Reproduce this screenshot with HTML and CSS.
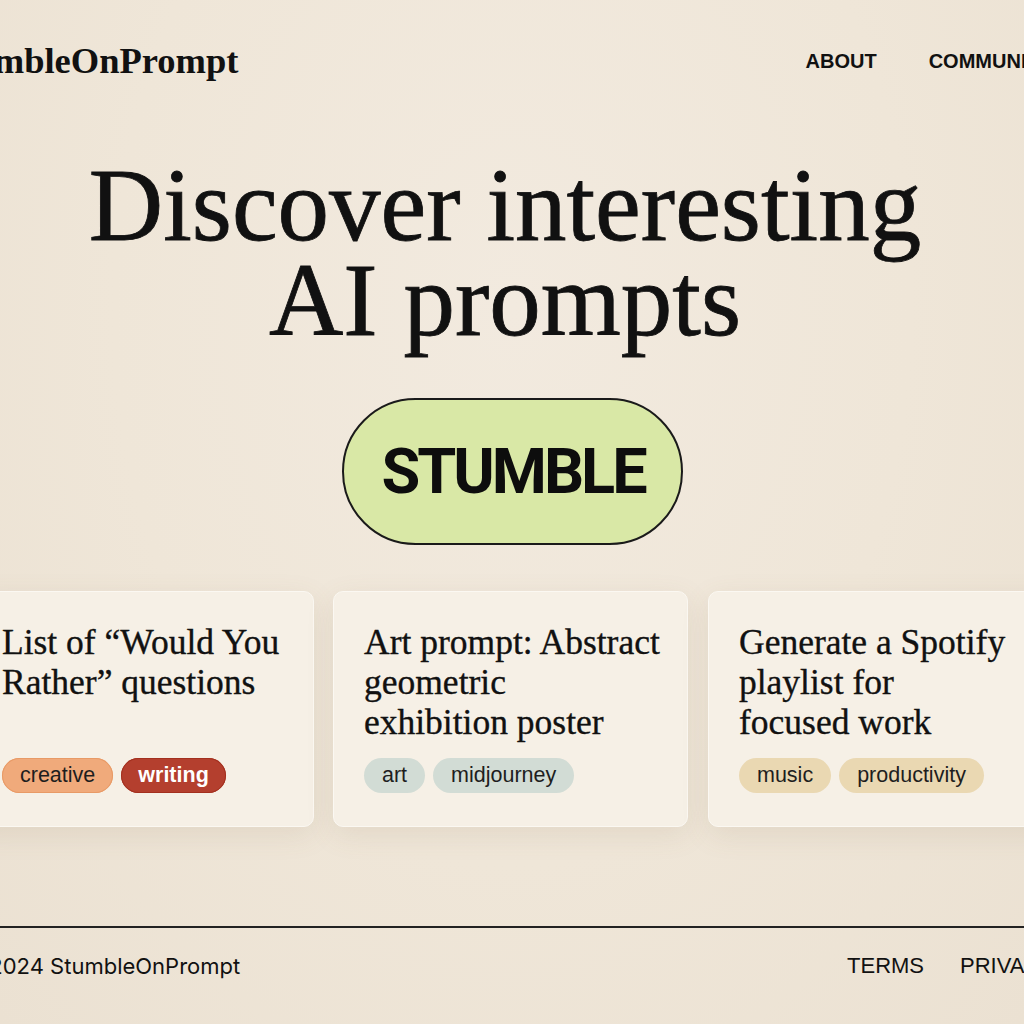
FILE: index.html
```html
<!DOCTYPE html>
<html lang="en">
<head>
<meta charset="utf-8">
<title>StumbleOnPrompt</title>
<link rel="stylesheet" href="styles.css">
</head>
<body>
<div class="page">
  <header class="header">
    <div class="logo">StumbleOnPrompt</div>
    <nav class="nav">
      <a href="#">ABOUT</a>
      <a href="#">COMMUNITY</a>
    </nav>
  </header>

  <main class="hero">
    <h1 class="title">Discover interesting<br>AI prompts</h1>
    <button class="stumble">STUMBLE</button>
  </main>

  <section class="cards">
    <article class="card card-first">
      <h2 class="card-title">List of “Would You<br>Rather” questions</h2>
      <div class="tags">
        <span class="tag tag-orange">creative</span>
        <span class="tag tag-red">writing</span>
      </div>
    </article>
    <article class="card">
      <h2 class="card-title">Art prompt: Abstract<br>geometric<br>exhibition poster</h2>
      <div class="tags">
        <span class="tag tag-sage">art</span>
        <span class="tag tag-sage">midjourney</span>
      </div>
    </article>
    <article class="card">
      <h2 class="card-title">Generate a Spotify<br>playlist for<br>focused work</h2>
      <div class="tags">
        <span class="tag tag-tan">music</span>
        <span class="tag tag-tan">productivity</span>
      </div>
    </article>
  </section>

  <footer class="footer">
    <div class="copy">© 2024 StumbleOnPrompt</div>
    <nav class="footer-links">
      <a href="#">TERMS</a>
      <a href="#">PRIVACY</a>
    </nav>
  </footer>
</div>
</body>
</html>
```
FILE: styles.css
```css
html, body {
  margin: 0;
  padding: 0;
}
body {
  width: 1024px;
  height: 1024px;
  overflow: hidden;
  background: #efe6d8;
  background-image: radial-gradient(ellipse at 50% 30%, #f2eadf 0%, #efe6d8 55%, #ebe1d2 100%);
  color: #111;
}
.page {
  width: 1138px;
  margin-left: -57px;
}
.header {
  display: flex;
  justify-content: space-between;
  align-items: center;
  padding: 41px 29px 0 0;
  height: 40px;
}
.logo {
  font-family: "Liberation Serif", "DejaVu Serif", serif;
  font-weight: 700;
  font-size: 36.5px;
  line-height: 40px;
  margin-left: -2px;
  color: #111;
}
.nav {
  display: flex;
  gap: 52px;
}
.nav a {
  font-family: "Liberation Sans", Arial, sans-serif;
  font-weight: 700;
  font-size: 20px;
  color: #111;
  text-decoration: none;
}
.hero {
  display: flex;
  flex-direction: column;
  align-items: center;
}
.title {
  margin: 77px 14px 0 0;
  font-family: "Liberation Serif", "DejaVu Serif", serif;
  font-weight: 400;
  font-size: 103px;
  line-height: 95px;
  text-align: center;
  color: #111;
  -webkit-text-stroke: 0.8px #111;
}
.stumble {
  margin-top: 50px;
  width: 341px;
  height: 147px;
  border: 2px solid #1a1a1a;
  border-radius: 74px;
  background: #d9e8a6;
  font-family: Roboto, "Liberation Sans", sans-serif;
  font-weight: 700;
  font-size: 63px;
  letter-spacing: -3px;
  color: #0d0d0d;
  padding: 0 0 0 2px;
  cursor: pointer;
}
.cards {
  display: flex;
  align-items: stretch;
  gap: 20px;
  margin-top: 46px;
  padding-left: 28px;
}
.card {
  flex: none;
  width: 355px;
  height: 236px;
  box-sizing: border-box;
  padding: 30px 30px 33px;
  background: #f6f0e6;
  border: 1.5px solid #fbf8f2;
  border-radius: 10px;
  box-shadow: 0 8px 28px rgba(130, 105, 70, 0.12);
  display: flex;
  flex-direction: column;
}
.card-first {
  width: 343px;
  margin-right: -1px;
}
.card-title {
  margin: 0;
  font-family: "Liberation Serif", "DejaVu Serif", serif;
  font-weight: 400;
  font-size: 35.5px;
  line-height: 40px;
  white-space: nowrap;
  color: #111;
  -webkit-text-stroke: 0.35px #111;
}
.tags {
  margin-top: auto;
  display: flex;
  gap: 8px;
}
.tag {
  font-family: "Liberation Sans", Arial, sans-serif;
  font-size: 21.5px;
  line-height: 35px;
  height: 35px;
  padding: 0 18px;
  border-radius: 18px;
  color: #1e1e1e;
}
.tag-orange {
  background: #f0aa7b;
  box-shadow: inset 0 0 0 1px #e89a66;
}
.tag-red {
  background: #b43f2e;
  color: #fff;
  font-weight: 700;
  padding: 0 17px;
  box-shadow: inset 0 0 0 1px #a3301f;
}
.tag-sage {
  background: #d2dcd5;
}
.tag-tan {
  background: #ead8b2;
}
.footer {
  margin-top: 99px;
  border-top: 2px solid #222;
  display: flex;
  justify-content: space-between;
  padding: 24px 26px 0 20px;
  line-height: 28px;
}
.copy {
  font-family: Inter, "Liberation Sans", sans-serif;
  font-size: 22px;
  color: #111;
}
.footer-links {
  display: flex;
  gap: 36px;
}
.footer-links a {
  font-family: "Liberation Sans", Arial, sans-serif;
  font-size: 22px;
  color: #111;
  text-decoration: none;
}
```
